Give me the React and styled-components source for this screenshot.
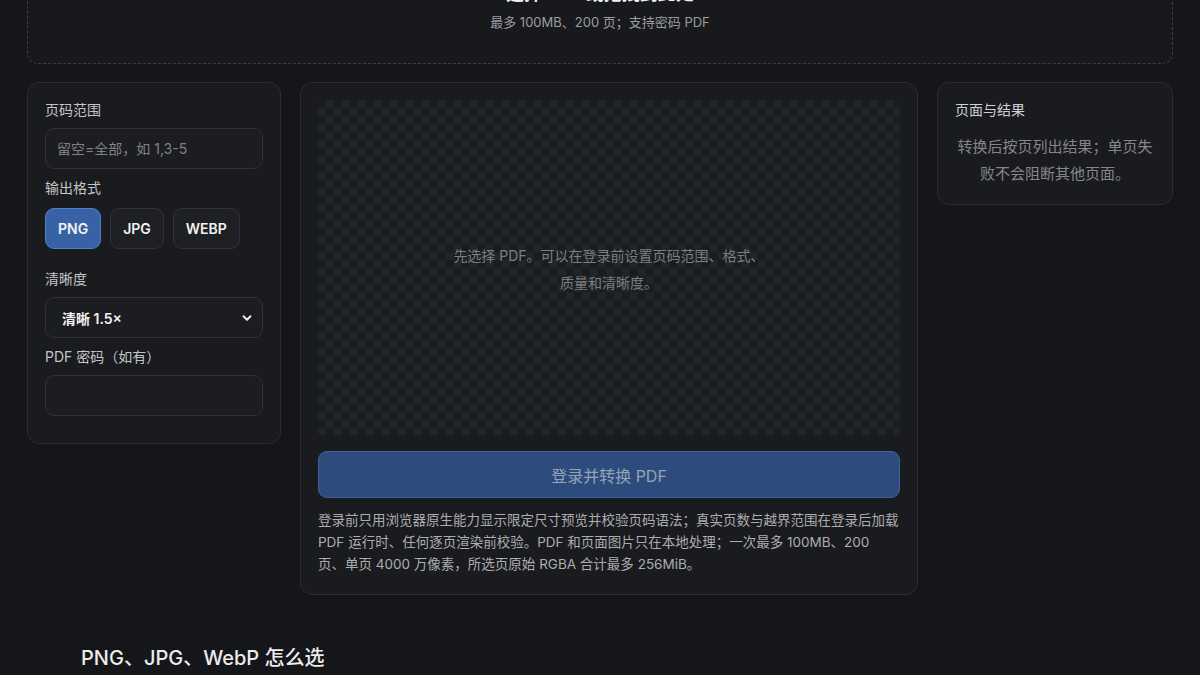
import React from 'react';
import styled, { createGlobalStyle } from 'styled-components';

const font = `"Inter", "Noto Sans CJK SC", "Noto Sans", sans-serif`;

const GlobalStyle = createGlobalStyle`
  html, body {
    margin: 0;
    padding: 0;
    background: #151619;
    color: #e6e6e6;
    font-family: ${font};
    overflow: hidden;
  }
  * { box-sizing: border-box; }
`;

const Page = styled.div`
  padding: 0 27px;
  margin-top: -46px;
`;

const DropZone = styled.div`
  border: 1px dashed #3b3d42;
  border-radius: 10px;
  background: #18191c;
  padding: 26px 20px 31px;
  text-align: center;
`;

const DropTitle = styled.div`
  font-size: 18px;
  font-weight: 700;
  line-height: 26px;
  color: #f2f2f2;
`;

const DropSub = styled.div`
  margin-top: 5px;
  font-size: 13px;
  line-height: 20px;
  color: #9b9ca0;
`;

const Workspace = styled.div`
  display: grid;
  grid-template-columns: 254px 1fr 236px;
  gap: 19px;
  margin-top: 18px;
  align-items: start;
`;

const Card = styled.div`
  background: #1a1b1e;
  border: 1px solid #2a2c30;
  border-radius: 12px;
  padding: ${(p) => p.$pad || '17px'};
`;

const Label = styled.div`
  font-size: 14px;
  line-height: 18px;
  color: #c4c5c8;
  margin-bottom: ${(p) => p.$gap || '9px'};
`;

const Field = styled.div`
  margin-bottom: ${(p) => p.$gap || '10px'};
  &:last-child { margin-bottom: 0; }
`;

const Input = styled.input`
  width: 100%;
  height: 41px;
  border-radius: 9px;
  border: 1px solid #2f3136;
  background: #1c1d21;
  color: #e6e6e6;
  font-family: ${font};
  font-size: 14px;
  padding: 0 11px;
  outline: none;
  &::placeholder { color: #808186; }
`;

const SelectBox = styled.div`
  height: 41px;
  border-radius: 9px;
  border: 1px solid #2f3136;
  background: #1c1d21;
  display: flex;
  align-items: center;
  justify-content: space-between;
  padding: 0 8px 0 16px;
  font-size: 14px;
  font-weight: 600;
  color: #f0f0f0;
`;

const FormatRow = styled.div`
  display: flex;
  gap: 9px;
`;

const FormatButton = styled.button`
  height: 41px;
  padding: 0 12px;
  border-radius: 9px;
  font-family: ${font};
  font-size: 14px;
  font-weight: 600;
  color: #f2f2f2;
  background: ${(p) => (p.$active ? '#3762a6' : '#1f2024')};
  border: 1px solid ${(p) => (p.$active ? '#5080c8' : '#303237')};
`;

const Center = styled.div`
  display: flex;
  flex-direction: column;
`;

const Preview = styled.div`
  height: 335px;
  border-radius: 4px;
  background-color: #1a1c1f;
  background-image:
    linear-gradient(45deg, #212528 25%, transparent 25%),
    linear-gradient(-45deg, #212528 25%, transparent 25%),
    linear-gradient(45deg, transparent 75%, #212528 75%),
    linear-gradient(-45deg, transparent 75%, #212528 75%);
  background-size: 16px 16px;
  background-position: 0 0, 0 8px, 8px -8px, -8px 0;
  display: flex;
  align-items: center;
  justify-content: center;
`;

const PreviewText = styled.div`
  max-width: 318px;
  text-align: center;
  font-size: 14px;
  line-height: 27px;
  color: #7c7e83;
  margin-top: 2px;
`;

const ConvertButton = styled.button`
  margin-top: 16px;
  height: 47px;
  width: 100%;
  border-radius: 9px;
  background: #2d4c7d;
  border: 1px solid #3f629c;
  color: #97a3b6;
  font-family: ${font};
  font-size: 16px;
`;

const Note = styled.p`
  margin: 11px 0 0;
  font-size: 13.5px;
  line-height: 22px;
  color: #acadb1;
`;

const ResultTitle = styled.div`
  font-size: 14px;
  line-height: 18px;
  color: #cfd0d3;
`;

const ResultText = styled.div`
  margin-top: 14px;
  text-align: center;
  font-size: 15px;
  line-height: 27px;
  color: #85868b;
`;

const Section = styled.h2`
  margin: 49px 0 0 54px;
  font-size: 20px;
  font-weight: 500;
  line-height: 28px;
  color: #ececec;
`;

const Chevron = () => (
  <svg width="14" height="14" viewBox="0 0 24 24" fill="none" stroke="#f0f0f0" strokeWidth="3.2" strokeLinecap="round" strokeLinejoin="round">
    <polyline points="6 9 12 15 18 9" />
  </svg>
);

export default function App() {
  return (
    <Page>
      <GlobalStyle />
      <DropZone>
        <DropTitle>选择 PDF 或拖拽到此处</DropTitle>
        <DropSub>最多 100MB、200 页；支持密码 PDF</DropSub>
      </DropZone>

      <Workspace>
        <Card $pad="18px 17px 27px">
          <Field>
            <Label>页码范围</Label>
            <Input placeholder="留空=全部，如 1,3-5" />
          </Field>
          <Field $gap="21px">
            <Label $gap="11px">输出格式</Label>
            <FormatRow>
              <FormatButton $active>PNG</FormatButton>
              <FormatButton>JPG</FormatButton>
              <FormatButton>WEBP</FormatButton>
            </FormatRow>
          </Field>
          <Field>
            <Label>清晰度</Label>
            <SelectBox>
              <span>清晰 1.5×</span>
              <Chevron />
            </SelectBox>
          </Field>
          <Field>
            <Label>PDF 密码（如有）</Label>
            <Input type="password" />
          </Field>
        </Card>

        <Card $pad="17px 17px 19px">
          <Center>
            <Preview>
              <PreviewText>先选择 PDF。可以在登录前设置页码范围、格式、质量和清晰度。</PreviewText>
            </Preview>
            <ConvertButton>登录并转换 PDF</ConvertButton>
            <Note>
              登录前只用浏览器原生能力显示限定尺寸预览并校验页码语法；真实页数与越界范围在登录后加载 PDF 运行时、任何逐页渲染前校验。PDF 和页面图片只在本地处理；一次最多 100MB、200 页、单页 4000 万像素，所选页原始 RGBA 合计最多 256MiB。
            </Note>
          </Center>
        </Card>

        <Card $pad="18px 17px 17px">
          <ResultTitle>页面与结果</ResultTitle>
          <ResultText>转换后按页列出结果；单页失败不会阻断其他页面。</ResultText>
        </Card>
      </Workspace>

      <Section>PNG、JPG、WebP 怎么选</Section>
    </Page>
  );
}
